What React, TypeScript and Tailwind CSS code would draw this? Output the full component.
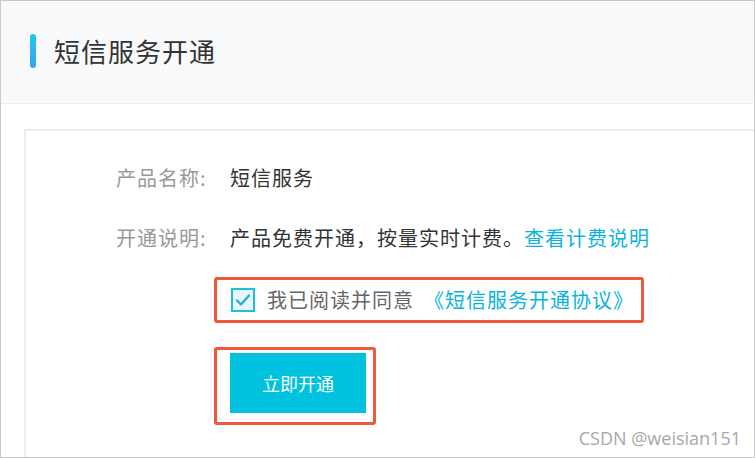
export default function App() {
  const font = { fontFamily: '"Noto Sans CJK SC", "Microsoft YaHei", sans-serif' };

  return (
    <div
      className="w-[755px] h-[458px] overflow-hidden border border-[#c9c9c9] bg-white relative"
      style={font}
    >
      {/* header */}
      <div className="h-[103px] bg-[#f8f9fb] border-b border-[#eceef1] flex items-center pl-[29px] pb-[2px]">
        <div className="w-[6px] h-[34px] rounded-full bg-gradient-to-b from-[#17cbe5] to-[#3b9ff2]" />
        <h1 className="ml-[18px] text-[26px] leading-none text-[#333] tracking-[1px]">短信服务开通</h1>
      </div>

      {/* card */}
      <div className="pt-[25px] pl-[23px]">
        <div className="border-l-2 border-t-2 border-[#e9eef4] h-[340px] pt-[33px] pl-[90px] text-[20px] tracking-[1px]">
          <div className="flex items-center h-[28px]">
            <span className="w-[114px] text-[#999]">产品名称:</span>
            <span className="text-[#333]">短信服务</span>
          </div>

          <div className="flex items-center h-[28px] mt-[32px]">
            <span className="w-[114px] text-[#999]">开通说明:</span>
            <span className="text-[#333]">产品免费开通，按量实时计费。</span>
            <a className="text-[#0ab3dc] cursor-pointer">查看计费说明</a>
          </div>

          <div className="ml-[98px] mt-[25px] w-[430px] h-[46px] border-[3px] border-[#f0583a] rounded-[3px] flex items-center pl-[14px]">
            <span className="w-[24px] h-[24px] border-2 border-[#21bde0] bg-[#e6f8fc] flex items-center justify-center">
              <svg width="16" height="14" viewBox="0 0 16 14" fill="none">
                <path d="M2 7.5 L6 11.5 L14 2.5" stroke="#2aa7d8" strokeWidth="2.4" strokeLinecap="round" strokeLinejoin="round" />
              </svg>
            </span>
            <span className="ml-[12px] text-[#666]">我已阅读并同意</span>
            <a className="ml-[10px] text-[#0ab3dc] cursor-pointer">《短信服务开通协议》</a>
          </div>

          <div className="ml-[98px] mt-[24px] w-[162px] h-[78px] border-[3px] border-[#f0583a] rounded-[3px] pl-[13px] pt-[3px]">
            <button className="w-[136px] h-[60px] bg-[#00c1de] text-white text-[18px] tracking-[0px]">立即开通</button>
          </div>
        </div>
      </div>

      <div
        className="absolute right-[13px] bottom-[5px] text-[18px] text-[#a8a8a8]"
        style={{ fontFamily: '"Open Sans", sans-serif' }}
      >
        CSDN @weisian151
      </div>
    </div>
  );
}
